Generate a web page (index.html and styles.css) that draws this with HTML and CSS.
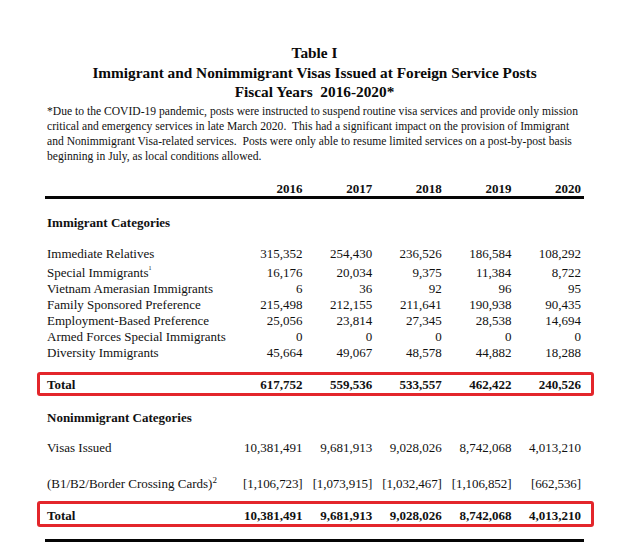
FILE: index.html
```html
<!DOCTYPE html>
<html lang="en">
<head>
<meta charset="utf-8">
<title>Table I</title>
<link rel="stylesheet" href="styles.css">
</head>
<body>
<div class="page">
  <header class="title">
    <div>Table I</div>
    <div>Immigrant and Nonimmigrant Visas Issued at Foreign Service Posts</div>
    <div>Fiscal Years&nbsp; 2016-2020*</div>
  </header>
  <p class="note">*Due to the COVID-19 pandemic, posts were instructed to suspend routine visa services and provide only mission<br>critical and emergency services in late March 2020.&nbsp; This had a significant impact on the provision of Immigrant<br>and Nonimmigrant Visa-related services.&nbsp; Posts were only able to resume limited services on a post-by-post basis<br>beginning in July, as local conditions allowed.</p>

  <div class="table">
    <div class="row head"><span></span><span>2016</span><span>2017</span><span>2018</span><span>2019</span><span>2020</span></div>
    <div class="rule"></div>

    <div class="section">Immigrant Categories</div>
    <div class="row first"><span>Immediate Relatives</span><span>315,352</span><span>254,430</span><span>236,526</span><span>186,584</span><span>108,292</span></div>
    <div class="row sup-row"><span>Special Immigrants<sup class="fn small">1</sup></span><span>16,176</span><span>20,034</span><span>9,375</span><span>11,384</span><span>8,722</span></div>
    <div class="row"><span>Vietnam Amerasian Immigrants</span><span>6</span><span>36</span><span>92</span><span>96</span><span>95</span></div>
    <div class="row"><span>Family Sponsored Preference</span><span>215,498</span><span>212,155</span><span>211,641</span><span>190,938</span><span>90,435</span></div>
    <div class="row"><span>Employment-Based Preference</span><span>25,056</span><span>23,814</span><span>27,345</span><span>28,538</span><span>14,694</span></div>
    <div class="row"><span>Armed Forces Special Immigrants</span><span>0</span><span>0</span><span>0</span><span>0</span><span>0</span></div>
    <div class="row"><span>Diversity Immigrants</span><span>45,664</span><span>49,067</span><span>48,578</span><span>44,882</span><span>18,288</span></div>
    <div class="row total total-imm"><span>Total</span><span>617,752</span><span>559,536</span><span>533,557</span><span>462,422</span><span>240,526</span></div>

    <div class="section section-non">Nonimmigrant Categories</div>
    <div class="row visas"><span>Visas Issued</span><span>10,381,491</span><span>9,681,913</span><span>9,028,026</span><span>8,742,068</span><span>4,013,210</span></div>
    <div class="row bcc"><span>(B1/B2/Border Crossing Cards)<sup class="fn">2</sup></span><span class="br">[1,106,723]</span><span class="br">[1,073,915]</span><span class="br">[1,032,467]</span><span class="br">[1,106,852]</span><span class="br">[662,536]</span></div>
    <div class="row total total-non"><span>Total</span><span>10,381,491</span><span>9,681,913</span><span>9,028,026</span><span>8,742,068</span><span>4,013,210</span></div>
    <div class="rule rule-bottom"></div>
  </div>
</div>
</body>
</html>
```

FILE: styles.css
```css
html, body {
  margin: 0;
  padding: 0;
  background: #ffffff;
}

body {
  color: #111111;
  font-family: "Liberation Serif", "Times New Roman", serif;
}

.page {
  width: 539px;
  margin-left: 45px;
  padding-top: 43px;
}

.title {
  text-align: center;
  font-weight: bold;
  font-size: 15.3px;
  line-height: 19.5px;
  color: #0a0a0a;
}

.note {
  margin: 2px 0 0 2px;
  font-size: 11.6px;
  line-height: 15px;
  white-space: nowrap;
}

.table {
  margin-top: 17.5px;
}

.row {
  display: grid;
  grid-template-columns: 186px repeat(5, 69.6px);
  margin-left: 2px;
  font-size: 13px;
  line-height: 16px;
  white-space: nowrap;
}

.row span:not(:first-child) {
  text-align: right;
}

.head {
  font-weight: bold;
  line-height: 15px;
}

.rule {
  height: 3px;
  background: #050505;
  width: 539px;
}

.section {
  margin: 15.5px 0 0 2px;
  font-size: 13px;
  line-height: 16px;
  font-weight: bold;
}

.first {
  margin-top: 15px;
}

.sup-row {
  padding-top: 3px;
}

.fn {
  font-size: 9px;
  line-height: 0;
  vertical-align: 5px;
}

.fn.small {
  font-size: 6px;
  vertical-align: 7px;
}

.total {
  font-weight: bold;
  border: 3px solid #e3262b;
  border-radius: 3px;
  margin-left: -8px;
  padding: 2px 10px 0 7px;
  width: 534px;
}

.total-imm {
  margin-top: 11.5px;
}

.section-non {
  margin-top: 14px;
}

.visas {
  margin-top: 14px;
}

.bcc {
  margin-top: 20px;
}

.br {
  letter-spacing: -0.1px;
}

.total-non {
  margin-top: 9px;
  padding-top: 4px;
}

.rule-bottom {
  margin-top: 12px;
}
```
